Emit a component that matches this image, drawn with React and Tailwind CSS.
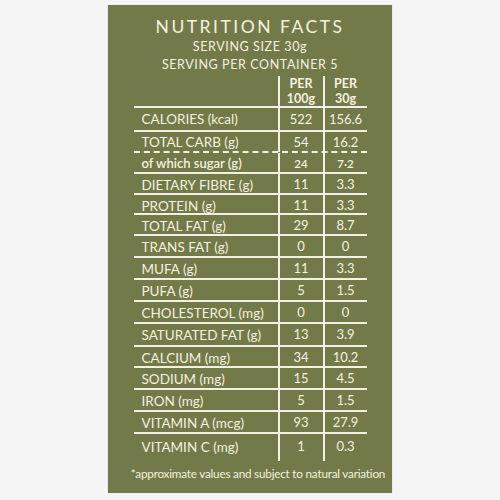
const rows = [
  { name: "CALORIES (kcal)", a: "522", b: "156.6", h: "h-[24px]" },
  { name: "TOTAL CARB (g)", a: "54", b: "16.2", h: "h-[21px]", dashed: true, low: true },
  { name: "of which sugar (g)", a: "24", b: "7·2", h: "h-[21px]", sub: true },
  { name: "DIETARY FIBRE (g)", a: "11", b: "3.3", h: "h-[21px]" },
  { name: "PROTEIN (g)", a: "11", b: "3.3", h: "h-[20px]" },
  { name: "TOTAL FAT (g)", a: "29", b: "8.7", h: "h-[21px]" },
  { name: "TRANS FAT (g)", a: "0", b: "0", h: "h-[22px]" },
  { name: "MUFA (g)", a: "11", b: "3.3", h: "h-[22px]" },
  { name: "PUFA (g)", a: "5", b: "1.5", h: "h-[22px]" },
  { name: "CHOLESTEROL (mg)", a: "0", b: "0", h: "h-[22px]" },
  { name: "SATURATED FAT (g)", a: "13", b: "3.9", h: "h-[23px]" },
  { name: "CALCIUM (mg)", a: "34", b: "10.2", h: "h-[21px]" },
  { name: "SODIUM (mg)", a: "15", b: "4.5", h: "h-[22px]" },
  { name: "IRON (mg)", a: "5", b: "1.5", h: "h-[22px]" },
  { name: "VITAMIN A (mcg)", a: "93", b: "27.9", h: "h-[22px]" },
  { name: "VITAMIN C (mg)", a: "1", b: "0.3", h: "h-[27px]", last: true },
];

const Row = ({ r }) => {
  const line = r.last ? "" : r.dashed ? "border-b-2 border-dashed" : "border-b-2";
  const val = r.sub ? "text-[11.5px] font-semibold" : "text-[13px]";
  const place = r.last ? "items-start pt-[3px]" : r.low ? "items-end" : "items-center pt-[1px]";
  return (
    <div className={`grid grid-cols-[144px_45px_44px] ${r.h} ${line} border-[#f3f1df]`}>
      <div className={`flex pl-2 ${place} ${r.sub ? "text-[13px] font-semibold" : "text-[13.5px]"}`}>{r.name}</div>
      <div className={`flex justify-center border-l-2 border-[#f3f1df] ${val} ${place}`}>{r.a}</div>
      <div className={`flex justify-center border-l-2 border-[#f3f1df] ${val} ${place}`}>{r.b}</div>
    </div>
  );
};

export default function App() {
  return (
    <div className="w-[500px] h-[500px] bg-[#f5f5f5] flex justify-center pt-[5px] font-['Lato',sans-serif]">
      <div className="w-[284px] h-[488px] bg-[#737a4a] text-[#f3f1df] flex flex-col items-center shadow-[0_0_1px_rgba(0,0,0,0.2)]">
        <div className="mt-[11px] text-[17.5px] leading-[22px] tracking-[2.5px]">NUTRITION FACTS</div>
        <div className="text-[12.5px] leading-[18px] tracking-[0.6px]">SERVING SIZE 30g</div>
        <div className="text-[12.5px] leading-[18px] tracking-[0.6px]">SERVING PER CONTAINER 5</div>
        <div className="mt-[4px] w-[233px] flex flex-col">
          <div className="grid grid-cols-[144px_45px_44px] h-[30px] border-b-2 border-[#f3f1df]">
            <div></div>
            <div className="border-l-2 border-[#f3f1df] flex flex-col items-center text-[12.5px] font-bold leading-[15px] -mt-[2px]">
              <span>PER</span>
              <span>100g</span>
            </div>
            <div className="border-l-2 border-[#f3f1df] flex flex-col items-center text-[12.5px] font-bold leading-[15px] -mt-[2px]">
              <span>PER</span>
              <span>30g</span>
            </div>
          </div>
          {rows.map((r) => (
            <Row key={r.name} r={r} />
          ))}
        </div>
        <div className="mt-[4px] pl-[16px] text-[11.7px] tracking-[-0.2px]">*approximate values and subject to natural variation</div>
      </div>
    </div>
  );
}
